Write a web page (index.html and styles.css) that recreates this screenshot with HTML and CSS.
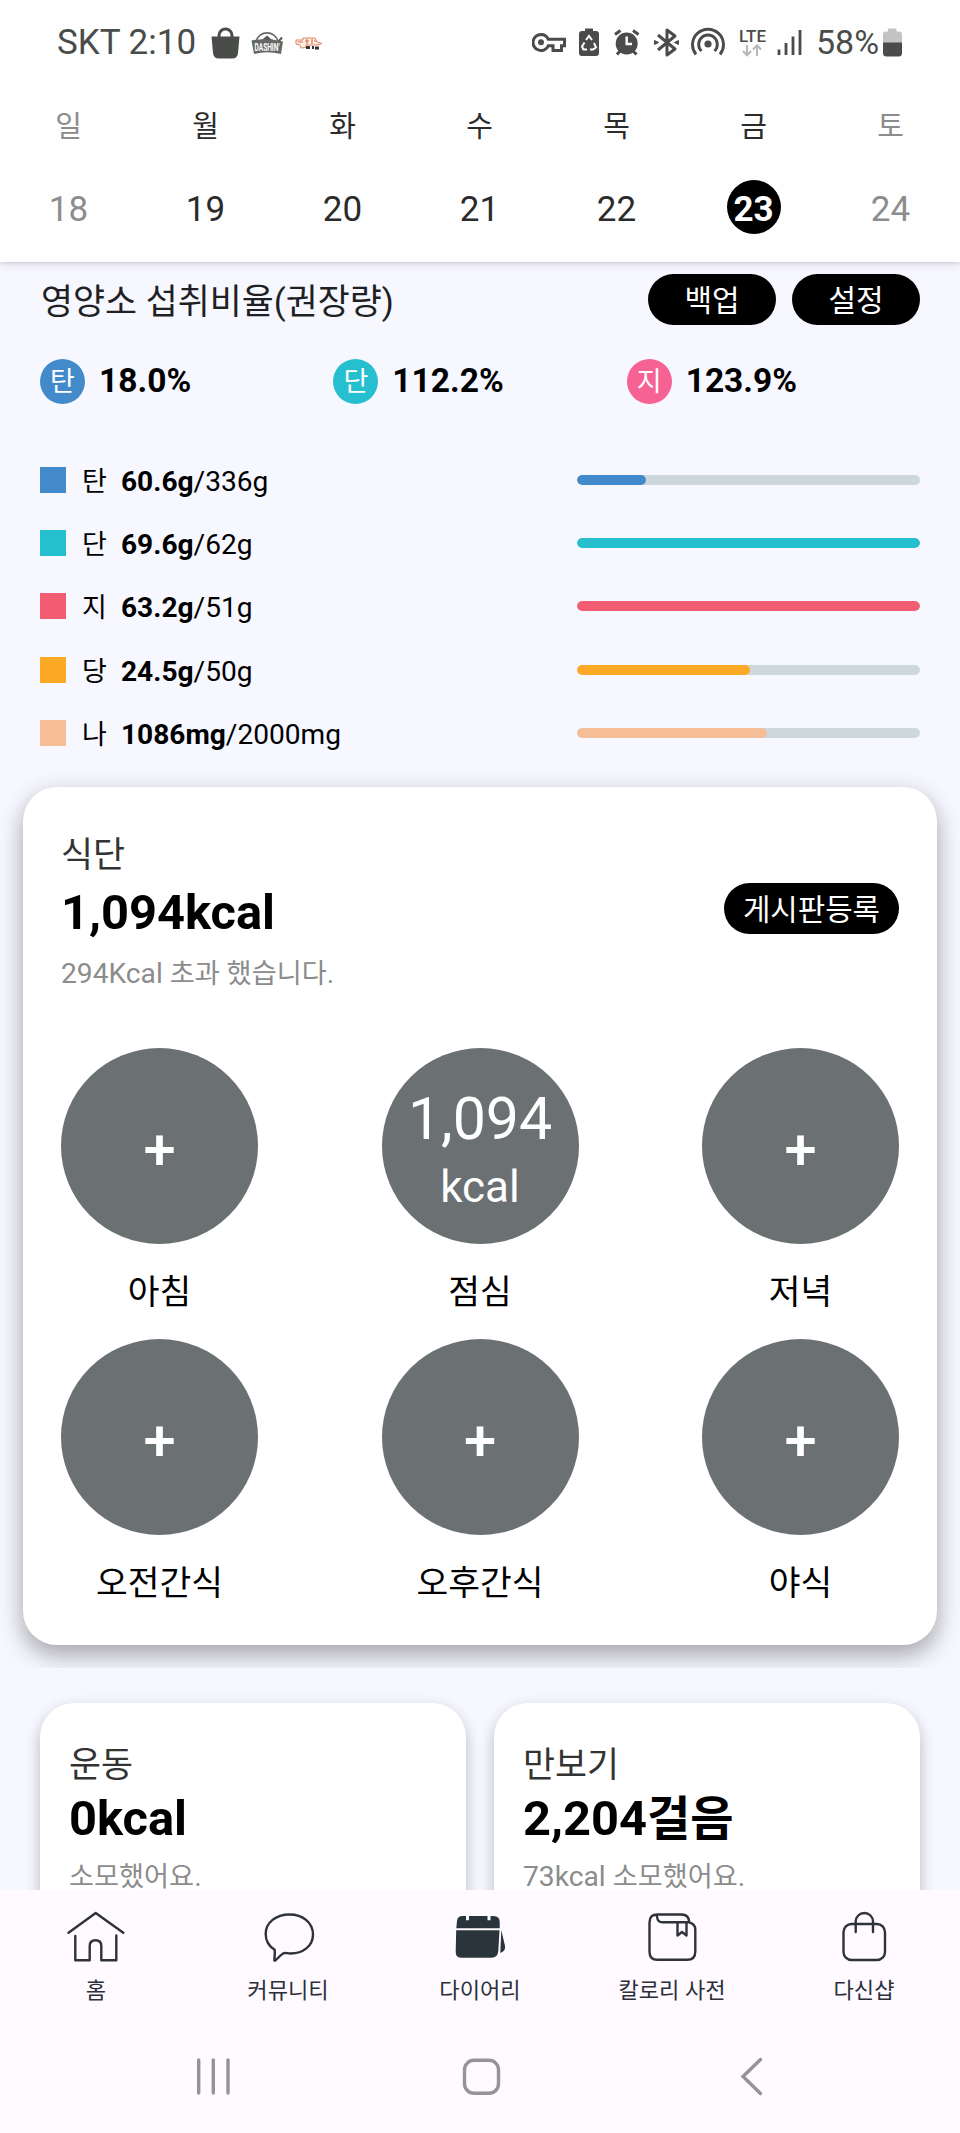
FILE: index.html
```html
<!DOCTYPE html>
<html lang="ko">
<head>
<meta charset="utf-8">
<title>다이어리</title>
<link rel="stylesheet" href="styles.css">
</head>
<body>
<div class="screen">
  <header class="header">
    <div class="status">
      <span class="clock">SKT 2:10</span>
      <svg class="ic-bag" width="30" height="32" viewBox="0 0 30 32"><path d="M8 11V8.500a6.500 6.500 0 0 1 13 0V11" fill="none" stroke="#4a4c4a" stroke-width="3"/><path d="M0.500 9.500H28.500L27 26Q26.500 31.500 21 31.500H8Q2.500 31.500 2 26Z" fill="#4a4c4a"/></svg>
      <svg class="ic-dashin" width="34" height="32" viewBox="0 0 34 32"><path d="M5 14A11.500 11.500 0 0 1 27 14" fill="none" stroke="#666866" stroke-width="1.600"/><path d="M8 14L12 12L16 8.500L20 12L25 14Z" fill="#555755"/><path d="M27.500 14.500L31 10.500" stroke="#555755" stroke-width="2"/><path d="M0.500 13.500Q16 10.500 32 14.500L30 27Q16 23.500 3 27Z" fill="#666866"/><text x="16" y="24" text-anchor="middle" textLength="25" lengthAdjust="spacingAndGlyphs" class="dashin-text">DASHIN'</text></svg>
      <svg class="ic-promo" width="28" height="32" viewBox="0 0 28 32"><path d="M1 13H8V11H20L22 15L27 16.500L22 18H11V20.500L6 21L5 18L1 17Z" fill="#fdeee6" stroke="#dc8860" stroke-width="1"/><path d="M3 15H8M10 14H14M12 12V17M17 12V17M19 14H21" stroke="#dc7546" stroke-width="1.200"/><path d="M11 20.500H15M17 20.500H19M20 21H24" stroke="#333" stroke-width="3"/></svg>
      <span class="status-space"></span>
      <svg width="34" height="32" viewBox="0 0 34 32"><path d="M9 7.500a8 8 0 1 0 7.300 11.300H21V23.500H29.500V18.800H32.500V12.300H16.300A8 8 0 0 0 9 7.500Z" fill="none" stroke="#4a4c4a" stroke-width="3"/><circle cx="9" cy="15.300" r="3" fill="#4a4c4a"/></svg>
      <svg class="ic-saver" width="20" height="32" viewBox="0 0 20 32"><path d="M6 1.500H14V4H17Q20 4 20 7V26Q20 29 17 29H3Q0 29 0 26V7Q0 4 3 4H6Z" fill="#4a4c4a"/><path d="M7 13L10 9L13 13M15 16L17 20.500L14 22.500H11M8 22.500H4.500L3 19.500L5.500 15.500" fill="none" stroke="#fff" stroke-width="2"/></svg>
      <svg class="ic-alarm" width="26" height="32" viewBox="0 0 26 32"><circle cx="12.700" cy="16.500" r="11" fill="#4a4c4a"/><path d="M1 7.500L6.500 3.500M24.500 7.500L19 3.500M3 27.500L6 24M22.500 27.500L19 24" stroke="#4a4c4a" stroke-width="3"/><path d="M12.700 9.500V17H18" fill="none" stroke="#fff" stroke-width="2.400"/></svg>
      <svg class="ic-bt" width="26" height="32" viewBox="0 0 26 32"><path d="M4 8L21 22L13 28V3L21 9L4 23" fill="none" stroke="#4a4c4a" stroke-width="3" stroke-linejoin="round"/><path d="M0.500 13.500L4.500 15.500L0.500 17.500ZM24.500 13.500L20.500 15.500L24.500 17.500Z" fill="#4a4c4a" stroke="#4a4c4a"/></svg>
      <svg class="ic-hot" width="35" height="32" viewBox="0 0 35 32"><circle cx="17" cy="17" r="3.600" fill="#4a4c4a"/><path d="M10.500 24A9.300 9.300 0 1 1 23.500 24M5 27.500A15.500 15.500 0 1 1 29 27.500" fill="none" stroke="#4a4c4a" stroke-width="2.900"/></svg>
      <svg class="ic-lte" width="28" height="32" viewBox="0 0 28 32"><text x="0" y="14.500" textLength="27" lengthAdjust="spacingAndGlyphs" class="lte-text">LTE</text><path d="M8 18V28M4 24L8 28.300L12 24M18 29V18.500M14 22.500L18 18.300L22 22.500" fill="none" stroke="#b5b5b5" stroke-width="1.900"/></svg>
      <svg class="ic-signal" width="26" height="32" viewBox="0 0 26 32"><path d="M2 22.500V28M9 16V28M16 9.500V28M23 3V28" stroke="#4a4c4a" stroke-width="2.800"/></svg>
      <span class="percent">58%</span>
      <svg width="20" height="32" viewBox="0 0 20 32"><path d="M5 1.500H13.500V4.500H16Q19 4.500 19 7.500V16H0V7.500Q0 4.500 3 4.500H5Z" fill="#c3c3c3"/><path d="M0 15.500H19V26Q19 29.500 15.500 29.500H3.500Q0 29.500 0 26Z" fill="#4a4c4a"/></svg>
    </div>
    <div class="week names"><span class="dim">일</span><span>월</span><span>화</span><span>수</span><span>목</span><span>금</span><span class="dim">토</span></div>
    <div class="week dates"><span class="dim">18</span><span>19</span><span>20</span><span>21</span><span>22</span><span><b class="today">23</b></span><span class="dim">24</span></div>
  </header>

  <main class="summary">
    <div class="title-row">
      <h1 class="title">영양소 섭취비율(권장량)</h1>
      <button class="pill">백업</button>
      <button class="pill">설정</button>
    </div>
    <div class="ratios">
      <div class="ratio"><span class="badge blue">탄</span><b>18.0%</b></div>
      <div class="ratio"><span class="badge teal">단</span><b>112.2%</b></div>
      <div class="ratio"><span class="badge pink">지</span><b>123.9%</b></div>
    </div>
    <div class="nutrients">
      <div class="nutrient"><i class="swatch blue"></i><span class="name">탄</span><span class="amount"><b>60.6g</b>/336g</span><div class="track"><div class="fill blue" style="width:20.2%"></div></div></div>
      <div class="nutrient"><i class="swatch teal"></i><span class="name">단</span><span class="amount"><b>69.6g</b>/62g</span><div class="track"><div class="fill teal" style="width:100%"></div></div></div>
      <div class="nutrient"><i class="swatch red"></i><span class="name">지</span><span class="amount"><b>63.2g</b>/51g</span><div class="track"><div class="fill red" style="width:100%"></div></div></div>
      <div class="nutrient"><i class="swatch orange"></i><span class="name">당</span><span class="amount"><b>24.5g</b>/50g</span><div class="track"><div class="fill orange" style="width:50.3%"></div></div></div>
      <div class="nutrient"><i class="swatch peach"></i><span class="name">나</span><span class="amount"><b>1086mg</b>/2000mg</span><div class="track"><div class="fill peach" style="width:55.3%"></div></div></div>
    </div>
    <section class="card diet">
      <h2 class="label">식단</h2>
      <div class="diet-row"><strong class="big">1,094kcal</strong><button class="pill wide">게시판등록</button></div>
      <p class="note">294Kcal <span class="ko">초과 했습니다</span>.</p>
      <div class="meals">
        <div class="meal"><div class="disc plus">+</div><span>아침</span></div>
        <div class="meal"><div class="disc total"><span>1,094</span><small>kcal</small></div><span>점심</span></div>
        <div class="meal"><div class="disc plus">+</div><span>저녁</span></div>
        <div class="meal"><div class="disc plus">+</div><span>오전간식</span></div>
        <div class="meal"><div class="disc plus">+</div><span>오후간식</span></div>
        <div class="meal"><div class="disc plus">+</div><span>야식</span></div>
      </div>
    </section>
  </main>

  <section class="activity">
    <div class="card mini"><h2 class="label">운동</h2><strong class="big">0kcal</strong><p class="note"><span class="ko">소모했어요</span>.</p></div>
    <div class="card mini"><h2 class="label">만보기</h2><strong class="big">2,204<span class="ko">걸음</span></strong><p class="note">73kcal <span class="ko">소모했어요</span>.</p></div>
  </section>

  <nav class="tabs">
    <a class="tab"><svg width="64" height="56" viewBox="0 0 64 56"><path d="M4.500 24.700L31.700 5L59.300 24.700M11.300 28V52.300H25.700V38Q25.700 32.200 31.500 32.200T37.300 38V52.300H52.300V27.500"/></svg>홈</a>
    <a class="tab"><svg width="64" height="56" viewBox="0 0 64 56"><path d="M18.700 41.700C12.500 38 9.700 32.500 9.700 26C9.700 14.500 20 6.500 33.500 6.500C47 6.500 57 15 57 26.500C57 38 47 45.700 34 45.500C31 45.300 29 44.500 27.500 45.300C24.500 47 22 50 19.500 52.300C18.500 53 18 52.500 18.300 51.500C18.800 48 19 45 18.700 41.700Z"/></svg>커뮤니티</a>
    <a class="tab"><svg width="64" height="56" viewBox="0 0 64 56"><path class="solid" d="M14.500 8H18V12.300H21V8H39.500V12.300H42.500V8H45.500Q51.700 8 51.700 14V20.200H8.300L9 13Q9.500 8 14.500 8ZM8.200 22.300H51.500L50.300 43Q49.800 49.700 43.500 49.700H13Q7.500 49.700 7.700 43.500ZM53.300 22L57 38Q58 43 52.300 45Z"/></svg>다이어리</a>
    <a class="tab"><svg width="64" height="56" viewBox="0 0 64 56"><path d="M17 8.500Q17.500 14.300 22.500 14.300H49.300Q49 6.500 41.500 6.500H17.500Q9.500 6.500 9.500 14.500V43.500Q9.500 51.800 17.500 51.800H47Q55.300 51.800 55.300 43.500V21.500Q55.300 16 49.300 14.300M37.500 14.300V27.500L42 24L46.500 27.500V14.300"/></svg>칼로리 사전</a>
    <a class="tab"><svg width="64" height="56" viewBox="0 0 64 56"><rect x="11.500" y="16" width="41.500" height="36" rx="8"/><path d="M23.700 24V13.500A8.650 8.500 0 0 1 41 13.500V24"/></svg>다신샵</a>
  </nav>
  <footer class="system">
    <svg width="36" height="40" viewBox="0 0 36 40"><path d="M3.700 4V37M18.300 4V37M33 4V37"/></svg>
    <svg class="home-key" width="40" height="40" viewBox="0 0 40 40"><rect x="3.500" y="4.300" width="34" height="33" rx="9.500"/></svg>
    <svg width="24" height="40" viewBox="0 0 24 40"><path d="M21.500 3.500L4 20.500L21.500 37.500"/></svg>
  </footer>
</div>
</body>
</html>
```

FILE: styles.css
```css
* { box-sizing: border-box; }
body { margin: 0; font-family: Roboto, "Noto Sans CJK KR", sans-serif; color: #000; }
h1, h2, p { margin: 0; font-weight: 400; }
button { font: inherit; border: 0; padding: 0; }
svg { display: block; flex: none; }
.screen { width: 960px; height: 2133px; overflow: hidden; display: flex; flex-direction: column; background: #f6f7ff; }
.ko { font-size: 0.965em; }

.header { position: relative; z-index: 1; flex: none; height: 262px; background: #fefeff; box-shadow: 0 1px 4px rgba(60, 30, 70, .18), 0 4px 10px rgba(90, 30, 70, .08); }
.status { height: 86px; padding: 0 57px; display: flex; align-items: center; color: #4a4c4a; font-size: 35px; line-height: 42px; }
.clock { width: 154px; white-space: nowrap; }
.ic-dashin { margin-left: 10px; }
.ic-promo { margin-left: 10px; }
.status-space { flex: 1; }
.ic-saver { margin-left: 13px; }
.ic-alarm { margin-left: 15px; }
.ic-bt { margin-left: 14px; }
.ic-hot { margin-left: 11px; }
.ic-lte { margin-left: 13px; }
.ic-signal { margin-left: 10px; }
.percent { margin-left: 13px; width: 67px; font-size: 34px; line-height: 40px; padding-bottom: 2px; white-space: nowrap; }
.dashin-text { font: 700 11px Roboto, sans-serif; fill: #fff; }
.lte-text { font: 500 17px Roboto, sans-serif; fill: #4a4c4a; }
.week { display: grid; grid-template-columns: repeat(7, 1fr); padding-right: 1px; text-align: center; color: #2b2b2b; }
.names { height: 94px; font-size: 29px; line-height: 83px; }
.dates { font-size: 35px; line-height: 59px; }
.dim { color: #8c8c8c; }
.today { display: block; width: 54px; height: 54px; margin: 0 auto; border-radius: 50%; background: #000; color: #fff; }

.summary { flex: none; height: 1406px; overflow: hidden; padding: 12px 23px 0; }
.title-row { display: flex; gap: 16px; height: 51px; padding: 0 17px 0 18px; }
.title { flex: 1; font-size: 34.8px; line-height: 56px; color: #1f1f24; }
.pill { width: 128px; height: 51px; border-radius: 26px; background: #000; color: #fff; font-size: 30px; line-height: 53px; text-align: center; }
.wide { width: 175px; font-size: 29.8px; }
.ratios { display: grid; grid-template-columns: repeat(3, 1fr); margin: 34px 17px 0; }
.ratio { display: flex; gap: 14px; align-items: center; height: 45px; font-size: 33.5px; line-height: 42px; }
.ratio b { font-weight: 700; padding-bottom: 2px; }
.badge { width: 45px; height: 45px; border-radius: 50%; color: #fff; font-size: 27px; line-height: 47px; text-align: center; }
.blue { background: #438acb; }
.teal { background: #26bfd0; }
.pink { background: #f76295; }
.red { background: #f35d74; }
.orange { background: #fcaa25; }
.peach { background: #f5be96; }
.nutrients { margin: 44.5px 17px 0; }
.nutrient { display: flex; align-items: center; height: 63.2px; font-size: 28.1px; line-height: 36px; }
.swatch { width: 26px; height: 26px; }
.name { width: 39px; margin-left: 16px; padding-top: 4px; font-size: 27px; }
.amount { flex: 1; padding-top: 4px; }
.track { width: 343px; height: 10px; border-radius: 5px; background: #cdd8dd; overflow: hidden; }
.fill { height: 10px; border-radius: 5px; }

.card { background: #fff; border-radius: 34px; }
.diet { height: 857.5px; margin-top: 23px; padding: 46px 38px 0; box-shadow: 0 11px 24px rgba(0, 0, 0, .3), 0 1px 22px rgba(70, 20, 50, .06); }
.label { font-size: 34.8px; line-height: 44px; color: #333; }
.big { display: block; font-size: 48.8px; line-height: 60px; font-weight: 700; }
.note { font-size: 28.2px; line-height: 40px; color: #8c8c8c; }
.diet-row { display: flex; justify-content: space-between; margin-top: 6px; }
.diet .note { margin-top: 11px; }
.meals { display: grid; grid-template-columns: repeat(3, 197px); justify-content: space-between; row-gap: 26px; margin-top: 54px; }
.meal { display: flex; flex-direction: column; align-items: center; gap: 28px; font-size: 34.5px; line-height: 41px; }
.meal:nth-child(n+4) { padding-top: 0; }
.disc { width: 197px; height: 196px; border-radius: 50%; background: #6b7072; color: #fff; text-align: center; font-size: 59.5px; }
.plus { line-height: 203px; font-size: 58px; font-weight: 500; }
.total { display: flex; flex-direction: column; padding-top: 41px; line-height: 60px; font-size: 59px; }
.total small { font-size: 44px; line-height: 76px; }

.activity { flex: none; height: 222px; overflow: hidden; display: grid; grid-template-columns: 1fr 1fr; gap: 28px; padding: 35px 40px 0; }
.mini { height: 260px; padding: 39.5px 29px 0; box-shadow: 0 8px 16px rgba(0, 0, 0, .2), 0 1px 16px rgba(70, 20, 50, .06); }
.mini .big { margin-top: 2px; }
.mini .note { margin-top: 8px; }

.tabs { position: relative; flex: none; height: 143px; padding-top: 18px; display: grid; grid-template-columns: repeat(5, 1fr); background: #fefaff; }
.tab { display: flex; flex-direction: column; align-items: center; gap: 11px; font-size: 22.1px; line-height: 30px; color: #2b3038; }
.tab svg { fill: none; stroke: #2d3339; stroke-width: 2.4; stroke-linecap: round; stroke-linejoin: round; }
.tab .solid { fill: #2a353b; stroke: none; }
.system { flex: 1; display: flex; padding: 22.5px 0 0 195px; background: #fefaff; }
.system svg { fill: none; stroke: #989296; stroke-width: 3.4; stroke-linecap: round; }
.home-key { margin: 0 238px 0 230px; }
```
